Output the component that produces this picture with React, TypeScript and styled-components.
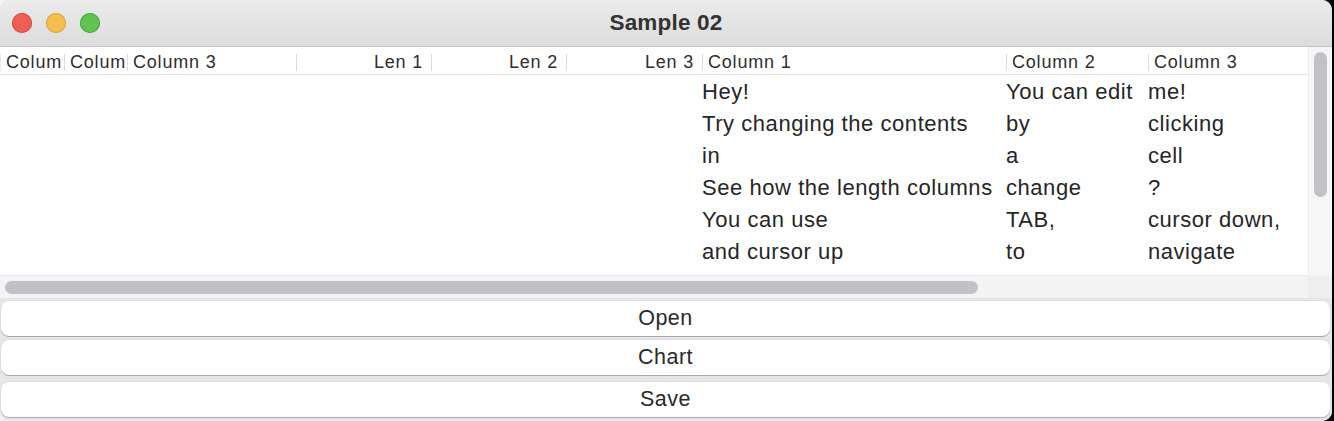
import React from "react";
import styled, { createGlobalStyle } from "styled-components";

const Global = createGlobalStyle`
  html, body { margin: 0; padding: 0; }
  body {
    width: 1334px;
    height: 421px;
    overflow: hidden;
    background: linear-gradient(to right, #f2f2f2 50%, #000 50%);
    font-family: "Liberation Sans", Arial, sans-serif;
    color: #262626;
  }
`;

const COLS = "64px 63px 169px 135px 135px 136px 304px 142px 160px";

const Window = styled.div`
  width: 1332px;
  height: 421px;
  display: flex;
  flex-direction: column;
  background: #e9e9eb;
  border-radius: 10px;
  overflow: hidden;
`;

const TitleBar = styled.div`
  height: 46px;
  flex: none;
  display: flex;
  align-items: center;
  position: relative;
  background: linear-gradient(#ecebec, #dddcdd);
  border-bottom: 1px solid #c3c3c3;
`;

const Lights = styled.div`
  display: flex;
  gap: 14px;
  padding-left: 12px;
`;

const Light = styled.span<{ $c: string; $b: string }>`
  width: 20px;
  height: 20px;
  border-radius: 50%;
  background: ${(p) => p.$c};
  box-shadow: inset 0 0 0 1px ${(p) => p.$b};
`;

const Title = styled.div`
  position: absolute;
  left: 0;
  right: 0;
  text-align: center;
  font-weight: bold;
  font-size: 22.5px;
  letter-spacing: 0.2px;
  color: #333;
  pointer-events: none;
`;

const TableFrame = styled.div`
  display: flex;
  height: 251px;
  flex: none;
  background: #fff;
`;

const TableMain = styled.div`
  width: 1308px;
  display: flex;
  flex-direction: column;
`;

const Grid = styled.div`
  display: grid;
  grid-template-columns: ${COLS};
  grid-auto-rows: 32px;
  height: 229px;
  align-content: start;
  border-bottom: 1px solid #e8e8e8;
  box-sizing: border-box;
`;

const HeaderCell = styled.div<{ $right?: boolean; $first?: boolean }>`
  height: 28px;
  display: flex;
  align-items: center;
  justify-content: ${(p) => (p.$right ? "flex-end" : "flex-start")};
  padding: ${(p) => (p.$right ? "4px 8px 0 0" : "4px 0 0 6px")};
  box-sizing: border-box;
  font-size: 18px;
  letter-spacing: 0.8px;
  color: #2e2e2e;
  white-space: nowrap;
  overflow: hidden;
  border-bottom: 1px solid #e6e6e6;
  position: relative;
  &::before {
    content: "";
    position: absolute;
    left: 0;
    top: 7px;
    height: 17px;
    width: 1px;
    background: ${(p) => (p.$first ? "#eaeaea" : "#dcdcdc")};
  }
`;

const Cell = styled.div`
  display: flex;
  align-items: center;
  padding: 0 0 6px 0;
  font-size: 22px;
  letter-spacing: 0.55px;
  color: #262626;
  white-space: nowrap;
  overflow: hidden;
`;

const HScroll = styled.div`
  height: 22px;
  background: #f4f4f6;
  display: flex;
  align-items: center;
  padding-left: 5px;
`;

const HThumb = styled.div`
  width: 973px;
  height: 13px;
  border-radius: 7px;
  background: #c2c1c5;
`;

const VScroll = styled.div`
  width: 24px;
  display: flex;
  flex-direction: column;
  background: #f6f6f7;
  border-left: 1px solid #ececec;
`;

const VThumb = styled.div`
  margin: 5px 0 0 5px;
  width: 13px;
  height: 145px;
  border-radius: 7px;
  background: #c2c1c5;
`;

const VCorner = styled.div`
  margin-top: auto;
  height: 22px;
  background: #eeeef0;
`;

const Buttons = styled.div`
  flex: 1;
  display: flex;
  flex-direction: column;
  gap: 5px;
  padding: 3px 0 0 1px;
  background: #e6e6e8;
`;

const Button = styled.button<{ $gapTop?: number }>`
  width: 1329px;
  height: 35px;
  flex: none;
  margin-top: ${(p) => p.$gapTop ?? 0}px;
  border: none;
  border-radius: 8px;
  background: #fff;
  box-shadow: 0 1px 0 #a9a9ab, 0 0 0 0.5px #d4d4d6;
  font-family: "Liberation Sans", Arial, sans-serif;
  font-size: 21.5px;
  letter-spacing: 0.5px;
  color: #2a2a2a;
  padding: 0;
`;

const headers: { t: string; r?: boolean }[] = [
  { t: "Colum" },
  { t: "Colum" },
  { t: "Column 3" },
  { t: "Len 1", r: true },
  { t: "Len 2", r: true },
  { t: "Len 3", r: true },
  { t: "Column 1" },
  { t: "Column 2" },
  { t: "Column 3" },
];

const rows = [
  ["Hey!", "You can edit", "me!"],
  ["Try changing the contents", "by", "clicking"],
  ["in", "a", "cell"],
  ["See how the length columns", "change", "?"],
  ["You can use", "TAB,", "cursor down,"],
  ["and cursor up", "to", "navigate"],
];

export default function App() {
  return (
    <>
      <Global />
      <Window>
        <TitleBar>
          <Lights>
            <Light $c="#ef5f58" $b="#dc4a43" />
            <Light $c="#f5be4f" $b="#dea43a" />
            <Light $c="#5fc452" $b="#4aa83f" />
          </Lights>
          <Title>Sample 02</Title>
        </TitleBar>
        <TableFrame>
          <TableMain>
            <Grid>
              {headers.map((h, i) => (
                <HeaderCell key={i} $right={h.r} $first={i === 0}>
                  {h.t}
                </HeaderCell>
              ))}
              {rows.map((r, ri) => (
                <React.Fragment key={ri}>
                  {[0, 1, 2, 3, 4, 5].map((k) => (
                    <Cell key={k} />
                  ))}
                  {r.map((c, ci) => (
                    <Cell key={"d" + ci}>{c}</Cell>
                  ))}
                </React.Fragment>
              ))}
            </Grid>
            <HScroll>
              <HThumb />
            </HScroll>
          </TableMain>
          <VScroll>
            <VThumb />
            <VCorner />
          </VScroll>
        </TableFrame>
        <Buttons>
          <Button>Open</Button>
          <Button $gapTop={-1}>Chart</Button>
          <Button $gapTop={2}>Save</Button>
        </Buttons>
      </Window>
    </>
  );
}
